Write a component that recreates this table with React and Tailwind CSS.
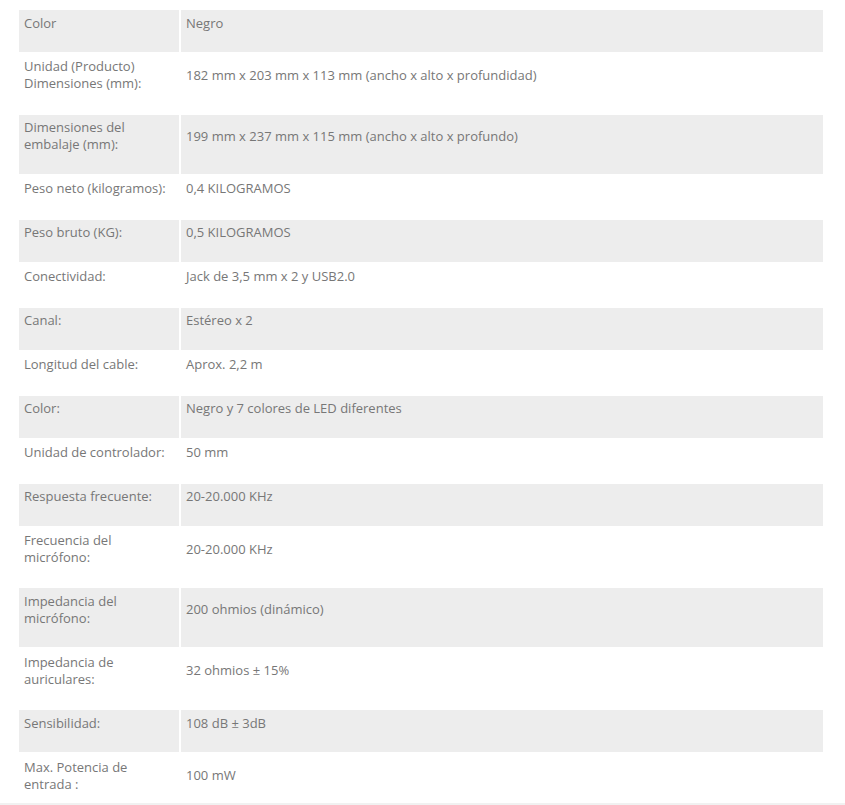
import React from "react";

const rows = [
  [["Color"], "Negro"],
  [["Unidad (Producto)", "Dimensiones (mm):"], "182 mm x 203 mm x 113 mm (ancho x alto x profundidad)"],
  [["Dimensiones del", "embalaje (mm):"], "199 mm x 237 mm x 115 mm (ancho x alto x profundo)"],
  [["Peso neto (kilogramos):"], "0,4 KILOGRAMOS"],
  [["Peso bruto (KG):"], "0,5 KILOGRAMOS"],
  [["Conectividad:"], "Jack de 3,5 mm x 2 y USB2.0"],
  [["Canal:"], "Estéreo x 2"],
  [["Longitud del cable:"], "Aprox. 2,2 m"],
  [["Color:"], "Negro y 7 colores de LED diferentes"],
  [["Unidad de controlador:"], "50 mm"],
  [["Respuesta frecuente:"], "20-20.000 KHz"],
  [["Frecuencia del", "micrófono:"], "20-20.000 KHz"],
  [["Impedancia del", "micrófono:"], "200 ohmios (dinámico)"],
  [["Impedancia de", "auriculares:"], "32 ohmios ± 15%"],
  [["Sensibilidad:"], "108 dB ± 3dB"],
  [["Max. Potencia de", "entrada :"], "100 mW"],
];

export default function App() {
  return (
    <div
      className="h-[805px] overflow-hidden flex flex-col bg-white text-[13px] leading-[1.3] text-[#777777]"
      style={{ fontFamily: '"Open Sans", "Noto Sans", sans-serif' }}
    >
      <div className="h-[803px] overflow-hidden pl-[17px] pt-[8px] shrink-0">
        <table className="w-[808px] table-fixed border-separate border-spacing-[2px]">
          <tbody>
            {rows.map(([label, value], i) => {
              const bg = i % 2 === 0 ? "bg-[#ededed]" : "bg-white";
              return (
                <tr key={i}>
                  <td className={`w-[160px] align-middle pt-[4.5px] pb-[5.6px] px-[5px] ${bg}`}>
                    <div className="mb-[15px]">
                      {label.map((l, j) => (
                        <div key={j}>{l}</div>
                      ))}
                    </div>
                  </td>
                  <td className={`align-middle pt-[4.5px] pb-[5.6px] px-[5px] ${bg}`}>
                    <div className="mb-[15px]">{value}</div>
                  </td>
                </tr>
              );
            })}
          </tbody>
        </table>
      </div>
      <div className="h-[2px] bg-[#f1f1f1] shrink-0" />
    </div>
  );
}
